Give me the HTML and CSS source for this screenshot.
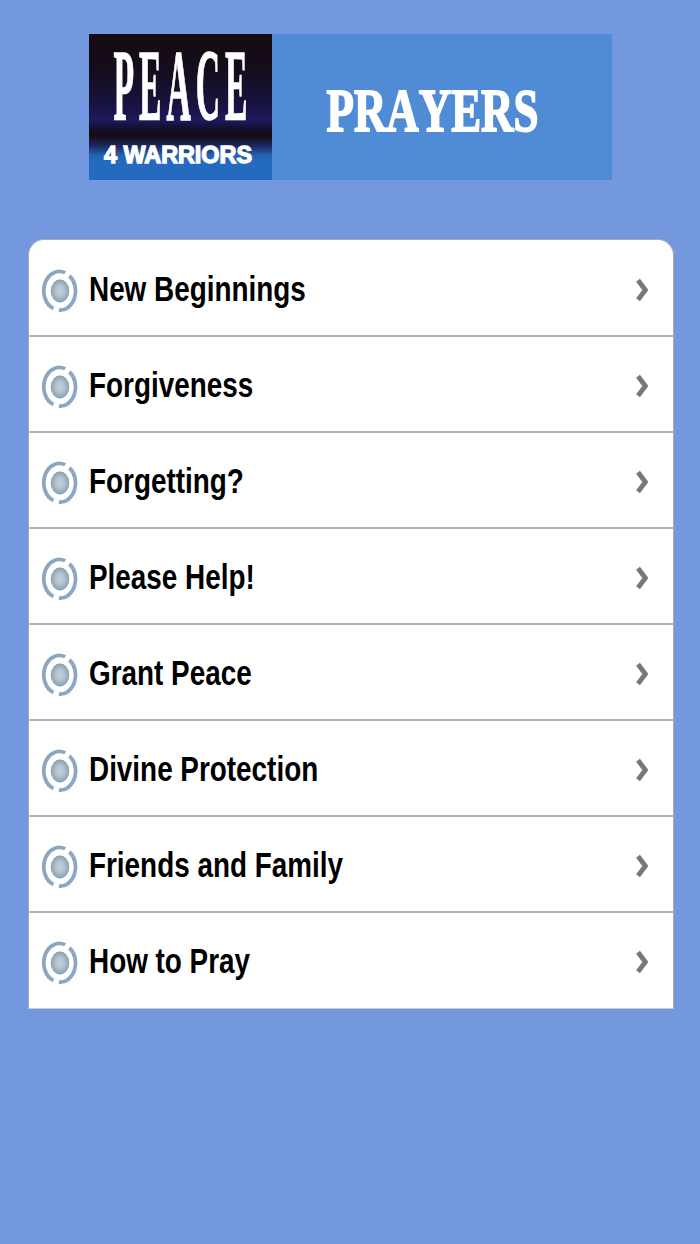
FILE: index.html
```
<!DOCTYPE html>
<html lang="en">
<head>

<meta charset="UTF-8">

<title>Prayers</title>

<link rel="stylesheet" href="styles.css">

</head>
<body>

<svg class="defs" width="0" height="0">
	<defs>
		<radialGradient id="dot">
			<stop offset="0" stop-color="#c5d1dc"/>
			<stop offset="0.5" stop-color="#b2c1cf"/>
			<stop offset="1" stop-color="#899eb5"/>
		</radialGradient>
		<symbol id="target" viewBox="0 0 38 46">
			<g fill="none" stroke="#8ea6bf" stroke-width="3.8">
				<path d="M24.2 4.9A15.3 19 0 0 0 12.4 40.6"/>
				<path d="M28.4 7.8A15.3 19 0 0 1 18 42"/>
			</g>
			<ellipse cx="19" cy="23" rx="9.3" ry="11.4" fill="url(#dot)"/>
		</symbol>
		<symbol id="arrow" viewBox="0 0 18 28">
			<path d="M5 4.3L12.4 14L5 23.7" fill="none" stroke="#777" stroke-width="4.8"/>
		</symbol>
	</defs>
</svg>

<header class="banner">
	<svg class="logo" width="183" height="146" viewBox="0 0 183 146">
		<text class="peace" transform="translate(24.5 86) scale(0.33 1)">PEACE</text>
		<text class="warriors" x="15" y="129" textLength="148" lengthAdjust="spacingAndGlyphs">4 WARRIORS</text>
	</svg>
	<svg class="heading" width="340" height="146" viewBox="0 0 340 146">
		<text transform="translate(54.5 96.5) scale(0.724 1)">PRAYERS</text>
	</svg>
</header>

<ul class="menu">
	<li><svg class="icon"><use href="#target"/></svg><span class="label">New Beginnings</span><svg class="arrow"><use href="#arrow"/></svg></li>
	<li><svg class="icon"><use href="#target"/></svg><span class="label">Forgiveness</span><svg class="arrow"><use href="#arrow"/></svg></li>
	<li><svg class="icon"><use href="#target"/></svg><span class="label">Forgetting?</span><svg class="arrow"><use href="#arrow"/></svg></li>
	<li><svg class="icon"><use href="#target"/></svg><span class="label">Please Help!</span><svg class="arrow"><use href="#arrow"/></svg></li>
	<li><svg class="icon"><use href="#target"/></svg><span class="label">Grant Peace</span><svg class="arrow"><use href="#arrow"/></svg></li>
	<li><svg class="icon"><use href="#target"/></svg><span class="label">Divine Protection</span><svg class="arrow"><use href="#arrow"/></svg></li>
	<li><svg class="icon"><use href="#target"/></svg><span class="label">Friends and Family</span><svg class="arrow"><use href="#arrow"/></svg></li>
	<li><svg class="icon"><use href="#target"/></svg><span class="label">How to Pray</span><svg class="arrow"><use href="#arrow"/></svg></li>
</ul>

</body>
</html>
```

FILE: styles.css
```
html, body {
	padding: 0;
	border: 0;
	margin: 0;
	background: #7398de;
	color: black;
	font-family: "Liberation Sans", Arial, sans-serif;
}
body {
	display: flow-root;
	min-height: 1244px;
}
.defs {
	display: block;
}

.banner {
	display: flex;
	width: 523px;
	height: 146px;
	margin: 34px 0 0 89px;
	background: #508cd5;
}
.logo {
	background: linear-gradient(#150b12 0%, #150d1c 25%, #181340 48%, #1c1a5c 59%, #15123c 63%, #160c18 68%, #190f20 71%, #1c2a68 77%, #2263b2 83%, #246bc0 88%, #246bc0 100%);
}
.peace {
	font: bold 102px "Liberation Serif", serif;
	font-kerning: none;
	letter-spacing: 15px;
	fill: white;
	stroke: white;
	stroke-width: 1.4;
}
.warriors {
	font: bold 24px "Liberation Sans", sans-serif;
	fill: white;
	stroke: white;
	stroke-width: 1.3;
}
.heading {
	font: bold 62px "Liberation Serif", serif;
	font-kerning: none;
	fill: white;
	stroke: white;
	stroke-width: 1.8;
}

.menu {
	box-sizing: border-box;
	width: 646px;
	height: 770px;
	margin: 59px 0 0 28px;
	padding: 1px 0 0;
	list-style: none;
	background: white;
	border: 1px solid #aaa;
	border-bottom-color: #c4cbd9;
	border-radius: 16px 16px 0 0;
}
.menu li {
	display: flex;
	align-items: center;
	box-sizing: border-box;
	height: 96px;
	padding: 0 22px 0 12px;
	border-bottom: 2px solid #b4b4b4;
}
.menu li:last-child {
	border-bottom-color: transparent;
}
.icon {
	width: 38px;
	height: 46px;
	margin-top: 6px;
}
.label {
	flex: 1;
	margin: 2px 0 0 10px;
	font-size: 35.5px;
	font-weight: bold;
	line-height: 40px;
	white-space: nowrap;
	/* condensed face */
	transform: scaleX(0.785);
	transform-origin: left;
}
.arrow {
	width: 18px;
	height: 28px;
	margin-top: 3px;
}
```
